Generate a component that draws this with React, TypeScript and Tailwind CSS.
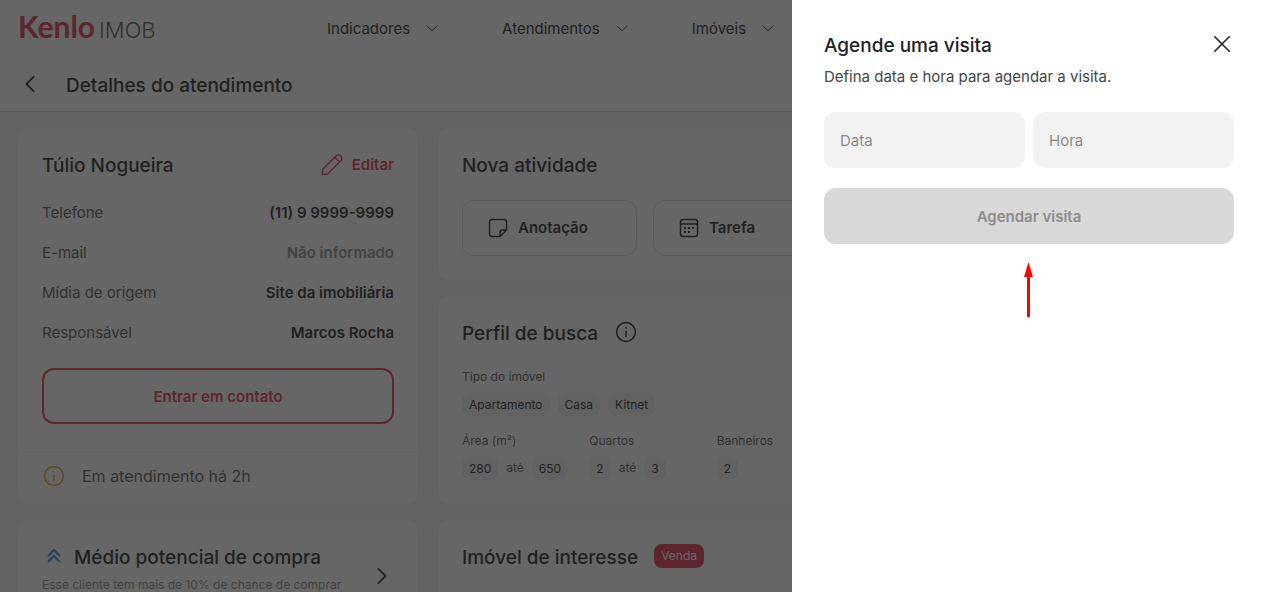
import { useState } from "react";
import type { ReactNode } from "react";

const menu = ["Indicadores", "Atendimentos", "Imóveis"];

const contact = [
	{ label: "Telefone", value: "(11) 9 9999-9999" },
	{ label: "E-mail", value: "" },
	{ label: "Mídia de origem", value: "Site da imobiliária" },
	{ label: "Responsável", value: "Marcos Rocha" },
];

const types = ["Apartamento", "Casa", "Kitnet"];

const ranges = [
	{ label: "Área (m²)", from: "280", to: "650" },
	{ label: "Quartos", from: "2", to: "3" },
	{ label: "Banheiros", from: "2", to: "" },
];

function Chevron({ className, d }: { className: string; d: string }) {
	return (
		<svg
			viewBox="0 0 20 20"
			fill="none"
			stroke="currentColor"
			strokeLinecap="round"
			strokeLinejoin="round"
			className={className}
			aria-hidden="true"
		>
			<path d={d} />
		</svg>
	);
}

function InfoIcon({ className }: { className: string }) {
	return (
		<svg
			viewBox="0 0 24 24"
			fill="none"
			stroke="currentColor"
			strokeWidth="1.5"
			className={className}
			aria-hidden="true"
		>
			<circle cx="12" cy="12" r="9.4" />
			<path d="M12 10.5v6.5" />
			<path d="M12 7v1.8" />
		</svg>
	);
}

function PencilIcon() {
	return (
		<svg
			viewBox="0 0 24 24"
			fill="none"
			stroke="currentColor"
			strokeWidth="1.5"
			strokeLinejoin="round"
			className="size-6"
			aria-hidden="true"
		>
			<path d="M2.2 21.6l.6-5.4L16 3a3.2 3.2 0 0 1 4.8 4.8L7.6 21z" />
			<path d="M14.8 4.2l4.8 4.8" />
		</svg>
	);
}

function NoteIcon() {
	return (
		<svg
			viewBox="0 0 24 24"
			fill="none"
			stroke="currentColor"
			strokeWidth="1.5"
			strokeLinejoin="round"
			className="size-6"
			aria-hidden="true"
		>
			<path d="M14 20.5H6A2.5 2.5 0 0 1 3.5 18V6A2.5 2.5 0 0 1 6 3.5h12A2.5 2.5 0 0 1 20.5 6v8z" />
			<path d="M14 20.5v-4a2.5 2.5 0 0 1 2.5-2.5h4" />
		</svg>
	);
}

function CalendarIcon() {
	return (
		<svg
			viewBox="0 0 24 24"
			fill="none"
			stroke="currentColor"
			strokeWidth="1.5"
			className="size-6"
			aria-hidden="true"
		>
			<rect x="3.5" y="3.5" width="17" height="17" rx="2.5" />
			<path d="M3.5 8h17" />
			<path d="M7 12h2M11 12h2M15 12h2M7 16h2M11 16h2" strokeWidth="2" />
		</svg>
	);
}

function Card({ children }: { children: ReactNode }) {
	return <section className="rounded-xl bg-white">{children}</section>;
}

function Title({ children }: { children: ReactNode }) {
	return (
		<h2 className="pt-1 text-[19px] leading-6 font-medium text-[#222222]">
			{children}
		</h2>
	);
}

function Tag({ children }: { children: ReactNode }) {
	return (
		<span className="rounded-lg bg-[#f2f2f2] px-[7px] pt-px text-xs leading-[23px] text-[#222222]">
			{children}
		</span>
	);
}

function Header() {
	return (
		<header className="flex h-14 items-center bg-white pl-[18px]">
			<a href="#inicio" className="flex w-[309px] items-baseline gap-1">
				<span className="font-[Lato] text-[30px] leading-10 font-bold text-[#e62e4d]">
					Kenlo
				</span>
				<span className="text-[22px] leading-10 font-light text-[#555555]">
					IMOB
				</span>
			</a>
			<nav className="flex gap-16">
				{menu.map((item) => (
					<a
						key={item}
						href={"#" + item}
						className="flex items-center gap-4 pt-0.5 text-[15px] text-[#222222]"
					>
						{item}
						<Chevron className="size-3 stroke-[1.5]" d="M2 5l8 8 8-8" />
					</a>
				))}
			</nav>
		</header>
	);
}

function ClientCard() {
	return (
		<Card>
			<div className="p-6 pt-[22px]">
				<div className="mb-[14px] flex items-center justify-between">
					<Title>Túlio Nogueira</Title>
					<button className="flex items-center gap-2 pt-0.5 text-[15px] leading-6 font-semibold text-[#e62e4d]">
						<PencilIcon />
						Editar
					</button>
				</div>
				<dl>
					{contact.map((row) => (
						<div
							key={row.label}
							className="flex h-10 items-center justify-between pt-0.5 text-[15px]"
						>
							<dt className="text-[#555555]">{row.label}</dt>
							{row.value ? (
								<dd className="font-semibold text-[#222222]">{row.value}</dd>
							) : (
								<dd className="font-semibold text-[#8c8c8c]">Não informado</dd>
							)}
						</div>
					))}
				</dl>
				<button className="mt-4 h-14 w-full rounded-xl border-2 border-[#e62e4d] pt-0.5 text-[15px] font-semibold text-[#e62e4d]">
					Entrar em contato
				</button>
			</div>
			<div className="flex h-14 items-center gap-4 border-t border-[#f2f2f2] px-6 pb-0.5 text-[#555555]">
				<InfoIcon className="size-6 text-[#eca336]" />
				Em atendimento há 2h
			</div>
		</Card>
	);
}

function PotentialCard() {
	return (
		<Card>
			<div className="flex items-center justify-between p-6 pt-[22px]">
				<div>
					<div className="mb-[7px] flex items-center gap-2">
						<svg
							viewBox="0 0 24 24"
							fill="none"
							stroke="#2f86d6"
							strokeWidth="2"
							className="size-6"
							aria-hidden="true"
						>
							<path d="M6 12l6-6 6 6" />
							<path d="M6 18l6-6 6 6" />
						</svg>
						<Title>Médio potencial de compra</Title>
					</div>
					<p className="min-h-8 text-xs text-[#8c8c8c]">
						Esse cliente tem mais de 10% de chance de comprar
					</p>
				</div>
				<Chevron className="size-6 stroke-[1.5]" d="M7 4l6 6-6 6" />
			</div>
		</Card>
	);
}

function ActivityCard() {
	return (
		<Card>
			<div className="p-6 pt-[22px]">
				<Title>Nova atividade</Title>
				<div className="mt-[22px] grid grid-cols-4 gap-4 text-[15px] font-semibold text-[#222222]">
					<button className="flex h-14 items-center gap-2 rounded-xl border border-[#d9d9d9] px-[23px]">
						<NoteIcon />
						Anotação
					</button>
					<button className="flex h-14 items-center gap-2 rounded-xl border border-[#d9d9d9] px-[23px]">
						<CalendarIcon />
						Tarefa
					</button>
				</div>
			</div>
		</Card>
	);
}

function SearchCard() {
	return (
		<Card>
			<div className="p-6 pt-[22px] text-xs text-[#555555]">
				<div className="flex items-center gap-4">
					<Title>Perfil de busca</Title>
					<InfoIcon className="size-6 text-[#222222]" />
				</div>
				<h3 className="mt-[23px]">Tipo do imóvel</h3>
				<div className="mt-[7px] flex gap-2">
					{types.map((type) => (
						<Tag key={type}>{type}</Tag>
					))}
				</div>
				<div className="mt-[17px] grid grid-cols-6 gap-4">
					{ranges.map((range) => (
						<div key={range.label}>
							<h3>{range.label}</h3>
							<div className="mt-[7px] flex items-center gap-2">
								<Tag>{range.from}</Tag>
								{range.to && (
									<>
										até
										<Tag>{range.to}</Tag>
									</>
								)}
							</div>
						</div>
					))}
				</div>
			</div>
		</Card>
	);
}

function VisitDrawer() {
	const [date, setDate] = useState("");
	const [time, setTime] = useState("");
	const field =
		"h-14 w-full min-w-0 rounded-xl bg-[#f2f2f2] px-4 text-[#222222] placeholder:text-[#8c8c8c]";
	return (
		<aside
			role="dialog"
			aria-label="Agende uma visita"
			className="fixed inset-y-0 right-0 w-[470px] max-w-full bg-white pt-[30px] pr-7 pl-8 text-[15px]"
		>
			<div className="flex items-center justify-between">
				<Title>Agende uma visita</Title>
				<button aria-label="Fechar" className="text-[#222222]">
					<svg
						viewBox="0 0 24 24"
						fill="none"
						stroke="currentColor"
						strokeWidth="1.6"
						strokeLinecap="round"
						className="size-6"
						aria-hidden="true"
					>
						<path d="M4.8 4.8l14.4 14.4M19.2 4.8L4.8 19.2" />
					</svg>
				</button>
			</div>
			<p className="mt-[7px] leading-6 text-[#444444]">
				Defina data e hora para agendar a visita.
			</p>
			<form className="mt-[23px]">
				<div className="grid grid-cols-2 gap-2">
					<input
						aria-label="Data"
						placeholder="Data"
						value={date}
						onChange={(e) => setDate(e.target.value)}
						className={field}
					/>
					<input
						aria-label="Hora"
						placeholder="Hora"
						value={time}
						onChange={(e) => setTime(e.target.value)}
						className={field}
					/>
				</div>
				<button
					type="submit"
					disabled={!date || !time}
					className="mt-5 h-14 w-full rounded-xl bg-[#e62e4d] pt-0.5 font-semibold text-white disabled:bg-[#d8d8d8] disabled:text-[#8c8c8c]"
				>
					Agendar visita
				</button>
			</form>
			<svg
				viewBox="0 0 12 56"
				className="mx-auto mt-[18px] h-14 w-3"
				aria-hidden="true"
			>
				<path d="M5.5 12v42" stroke="#ff0000" strokeWidth="3" strokeLinecap="round" />
				<path d="M5.5 0L10 15H1z" fill="#ff0000" />
			</svg>
		</aside>
	);
}

function App() {
	return (
		<div className="h-screen overflow-hidden bg-[#f2f2f2] font-[Inter,sans-serif] text-[#222222]">
			<Header />
			<div className="flex h-14 items-center gap-6 border-b border-[#d9d9d9] bg-white pl-[18px]">
				<a href="#voltar" aria-label="Voltar">
					<Chevron className="size-6 stroke-[1.5]" d="M13 4l-6 6 6 6" />
				</a>
				<h1 className="pt-1 text-[19px] leading-6 font-medium">
					Detalhes do atendimento
				</h1>
			</div>
			<main className="flex gap-5 pt-4 pr-7 pl-[18px]">
				<div className="flex w-[400px] shrink-0 flex-col gap-4">
					<ClientCard />
					<PotentialCard />
				</div>
				<div className="flex min-w-0 flex-1 flex-col gap-4">
					<ActivityCard />
					<SearchCard />
					<Card>
						<div className="flex items-center gap-4 p-6 pt-[22px] pb-12">
							<Title>Imóvel de interesse</Title>
							<span className="rounded-lg bg-[#e62e4d] px-[7px] text-xs leading-6 text-white">
								Venda
							</span>
						</div>
					</Card>
				</div>
			</main>
			<div className="fixed inset-0 bg-[#222222]/69" />
			<VisitDrawer />
		</div>
	);
}

export default App;
